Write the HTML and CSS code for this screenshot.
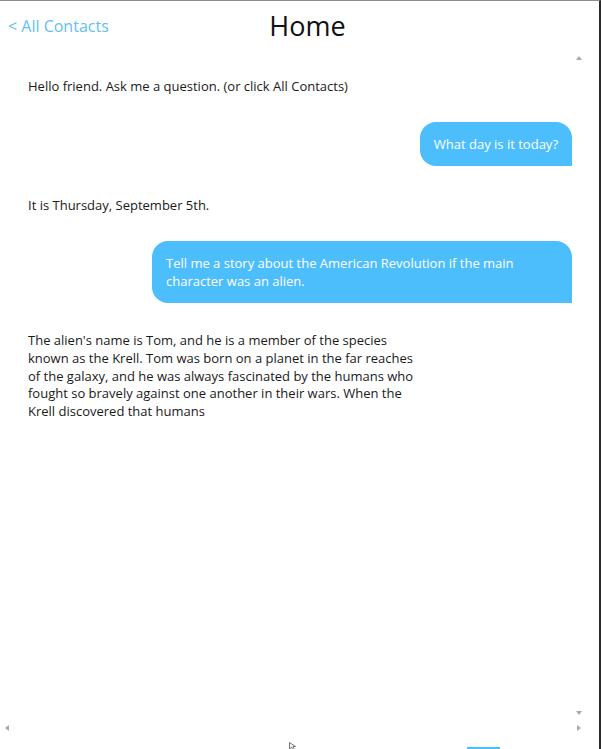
FILE: index.html
```html
<!DOCTYPE html>
<html lang="en">
<head>
<meta charset="utf-8">
<title>Home</title>
<link rel="stylesheet" href="styles.css">
</head>
<body>
<div class="app">
  <header class="header">
    <a class="back" href="#">&lt; All Contacts</a>
    <h1 class="title">Home</h1>
    <span></span>
  </header>
  <div class="viewport">
    <main class="chat">
      <p class="msg bot">Hello friend. Ask me a question. (or click All Contacts)</p>
      <div class="msg user"><span class="bubble">What day is it today?</span></div>
      <p class="msg bot">It is Thursday, September 5th.</p>
      <div class="msg user"><span class="bubble">Tell me a story about the American Revolution if the main character was an alien.</span></div>
      <p class="msg bot story">The alien's name is Tom, and he is a member of the species known as the Krell. Tom was born on a planet in the far reaches of the galaxy, and he was always fascinated by the humans who fought so bravely against one another in their wars. When the Krell discovered that humans</p>
    </main>
    <div class="vscroll">
      <span class="arrow up"></span>
      <span class="arrow down"></span>
    </div>
  </div>
  <div class="hscroll">
    <span class="arrow left"></span>
    <span class="arrow right"></span>
  </div>
  <footer class="footer">
    <svg class="cursor" width="8" height="8" viewBox="0 0 8 8"><path d="M0.5 0.5 L0.5 7 L2.5 5.2 L4 7.8 L5.2 7.2 L3.8 4.6 L6.5 4.5 Z" fill="#fff" stroke="#555" stroke-width="0.8"/></svg>
    <span class="tab"></span>
  </footer>
</div>
</body>
</html>
```

FILE: styles.css
```css
* { box-sizing: border-box; }
html, body { margin: 0; padding: 0; background: #fff; }
body {
  font-family: "Open Sans", "Noto Sans", sans-serif;
  color: #1a1a1a;
  width: 601px;
  height: 749px;
  overflow: hidden;
}
.app {
  width: 601px;
  height: 749px;
  border-top: 1px solid #8c8c8c;
  border-right: 2px solid #2a2a2a;
  display: flex;
  flex-direction: column;
}
.header {
  height: 51px;
  display: grid;
  grid-template-columns: 1fr auto 1fr;
  align-items: center;
  flex: none;
}
.back {
  justify-self: start;
  margin-left: 8px;
  margin-top: -2px;
  color: #62bff4;
  text-decoration: none;
  font-size: 16px;
}
.title {
  margin: -2px 0 0 16px;
  font-weight: 400;
  font-size: 27px;
  color: #111;
  line-height: 1;
}
.viewport {
  height: 668px;
  display: flex;
  flex: none;
}
.chat {
  flex: 1;
  padding: 12px 0 0 28px;
  display: flex;
  flex-direction: column;
  font-size: 13px;
  line-height: 18px;
}
.msg { margin: 0; }
.bot { padding: 13px 0; }
.story { max-width: 400px; line-height: 17.75px; padding-top: 12px; }
.user {
  display: flex;
  justify-content: flex-end;
  margin: 14px 0 17px;
}
.bubble {
  background: #4dbefc;
  color: #fff;
  padding: 13px 14px;
  border-radius: 16px 16px 0 16px;
  max-width: 420px;
}
.vscroll {
  width: 14px;
  margin-right: 13px;
  display: flex;
  flex-direction: column;
  justify-content: space-between;
  align-items: center;
  padding: 4px 0 5px;
}
.arrow {
  width: 0;
  height: 0;
  display: block;
}
.up { border-left: 3px solid transparent; border-right: 3px solid transparent; border-bottom: 4px solid #a9a9a9; }
.down { border-left: 3px solid transparent; border-right: 3px solid transparent; border-top: 4px solid #a9a9a9; }
.hscroll {
  height: 15px;
  flex: none;
  display: flex;
  justify-content: space-between;
  align-items: center;
  padding: 0 18px 0 5px;
}
.left { border-top: 3px solid transparent; border-bottom: 3px solid transparent; border-right: 4px solid #a9a9a9; }
.right { border-top: 3px solid transparent; border-bottom: 3px solid transparent; border-left: 4px solid #a9a9a9; }
.footer {
  height: 14px;
  flex: none;
  position: relative;
}
.cursor { position: absolute; left: 289px; top: 7px; }
.tab {
  position: absolute;
  left: 467px;
  bottom: 0;
  width: 33px;
  height: 2px;
  background: #4dbefc;
}
```
